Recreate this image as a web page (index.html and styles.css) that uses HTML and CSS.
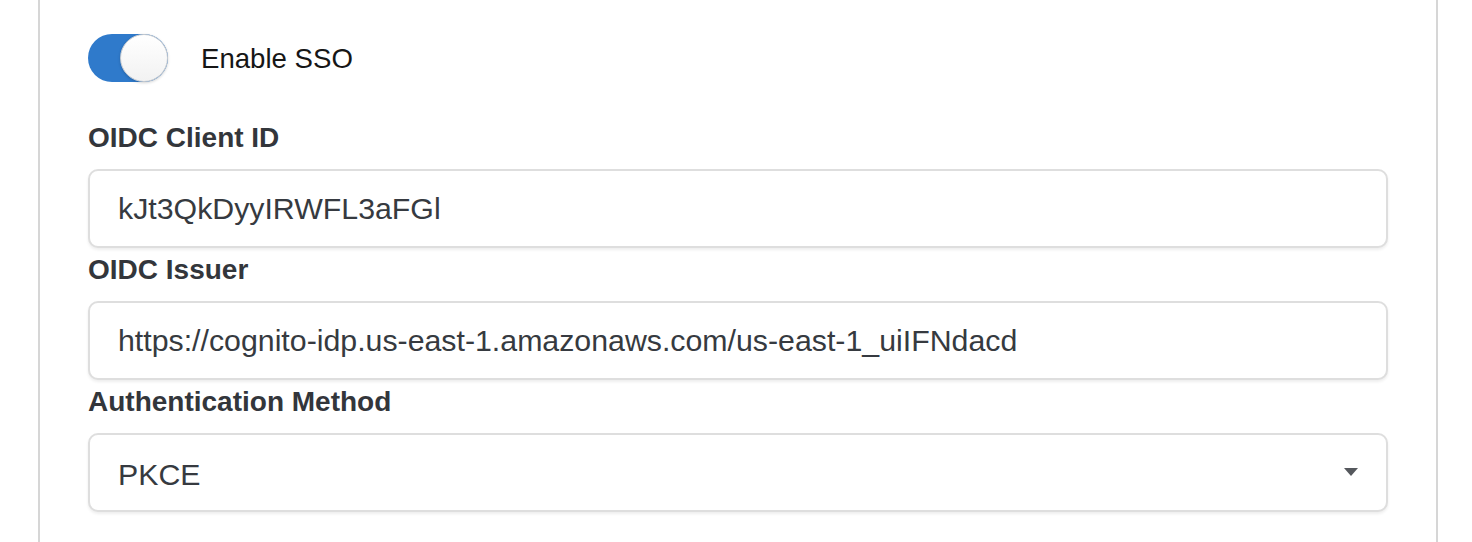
FILE: index.html
```html
<!DOCTYPE html>
<html lang="en">
<head>
<meta charset="utf-8">
<title>SSO Settings</title>
<link rel="stylesheet" href="styles.css">
</head>
<body>
<div class="panel">
  <div class="toggle-row">
    <span class="switch"><span class="knob"></span></span>
    <span class="toggle-label">Enable SSO</span>
  </div>
  <div class="field">
    <label class="field-label" for="cid">OIDC Client ID</label>
    <input class="text-input" id="cid" type="text" value="kJt3QkDyyIRWFL3aFGl" readonly>
  </div>
  <div class="field">
    <label class="field-label" for="iss">OIDC Issuer</label>
    <input class="text-input" id="iss" type="text" value="https://cognito-idp.us-east-1.amazonaws.com/us-east-1_uiIFNdacd" readonly>
  </div>
  <div class="field">
    <span class="field-label">Authentication Method</span>
    <div class="select">
      <span class="select-value">PKCE</span>
      <svg class="caret" width="14" height="8" viewBox="0 0 14 8"><path d="M0 0H14L7 8Z" fill="#55585d"/></svg>
    </div>
  </div>
</div>
</body>
</html>
```
FILE: styles.css
```css
html, body {
  margin: 0;
  padding: 0;
  background: #ffffff;
  height: 100%;
}
body {
  font-family: "Liberation Sans", Arial, sans-serif;
  overflow: hidden;
}
.panel {
  box-sizing: border-box;
  margin-left: 38px;
  width: 1400px;
  min-height: 100%;
  border-left: 2px solid #d6d6d6;
  border-right: 2px solid #d6d6d6;
  padding: 34px 48px 0 48px;
  display: flex;
  flex-direction: column;
}
.toggle-row {
  display: flex;
  align-items: center;
  gap: 33px;
  height: 48px;
  margin-bottom: 38px;
}
.switch {
  box-sizing: border-box;
  width: 80px;
  height: 48px;
  border-radius: 24px;
  background: #2f7acb;
  display: flex;
  justify-content: flex-end;
  flex-shrink: 0;
}
.knob {
  box-sizing: border-box;
  width: 48px;
  height: 48px;
  border-radius: 50%;
  background: linear-gradient(#ffffff, #f2f2f2);
  border: 1px solid #c9ccd0;
  box-shadow: 0 1px 3px rgba(0, 0, 0, 0.18);
}
.toggle-label {
  font-size: 27.6px;
  color: #161616;
  padding-top: 2px;
}
.field {
  display: flex;
  flex-direction: column;
  margin-bottom: 4px;
}
.field-label {
  font-size: 28px;
  font-weight: 700;
  line-height: 36px;
  color: #33363b;
  margin-bottom: 13px;
}
.text-input,
.select {
  box-sizing: border-box;
  width: 1300px;
  height: 79px;
  border: 2px solid #dedede;
  border-radius: 10px;
  box-shadow: 0 2px 3px rgba(0, 0, 0, 0.07);
  background: #ffffff;
  font-family: "Liberation Sans", Arial, sans-serif;
  font-size: 30.3px;
  color: #363a40;
  padding: 0 28px;
  margin: 0;
  outline: none;
}
.select {
  display: flex;
  align-items: center;
  justify-content: space-between;
  padding-top: 4px;
}
.caret {
  display: block;
  margin-top: -6px;
}
```
